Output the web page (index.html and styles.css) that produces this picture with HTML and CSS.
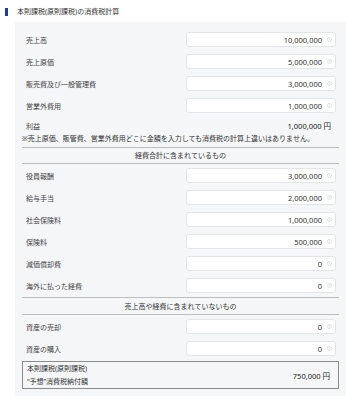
FILE: index.html
```html
<!DOCTYPE html>
<html lang="ja">
<head>
  <meta charset="UTF-8">
  <title>本則課税(原則課税)の消費税計算</title>
  <link rel="stylesheet" href="styles.css">
</head>
<body>
  <h1 class="title"><span class="bar"></span>本則課税(原則課税)の消費税計算</h1>

  <div class="panel">
    <div class="row"><span class="label">売上高</span><div class="field"><span>10,000,000</span><svg class="clear" viewBox="0 0 10 10"><circle cx="5" cy="5" r="4.2"/><path d="M3.3 3.3l3.4 3.4M6.7 3.3l-3.4 3.4"/></svg></div></div>
    <div class="row"><span class="label">売上原価</span><div class="field"><span>5,000,000</span><svg class="clear" viewBox="0 0 10 10"><circle cx="5" cy="5" r="4.2"/><path d="M3.3 3.3l3.4 3.4M6.7 3.3l-3.4 3.4"/></svg></div></div>
    <div class="row"><span class="label">販売費及び一般管理費</span><div class="field"><span>3,000,000</span><svg class="clear" viewBox="0 0 10 10"><circle cx="5" cy="5" r="4.2"/><path d="M3.3 3.3l3.4 3.4M6.7 3.3l-3.4 3.4"/></svg></div></div>
    <div class="row"><span class="label">営業外費用</span><div class="field"><span>1,000,000</span><svg class="clear" viewBox="0 0 10 10"><circle cx="5" cy="5" r="4.2"/><path d="M3.3 3.3l3.4 3.4M6.7 3.3l-3.4 3.4"/></svg></div></div>

    <div class="profit"><span class="label">利益</span><span class="amount">1,000,000 円</span></div>
    <p class="note">※売上原価、販管費、営業外費用どこに金額を入力しても消費税の計算上違いはありません。</p>

    <!-- 経費に含まれるもの -->
    <div class="heading">経費合計に含まれているもの</div>
    <div class="group">
      <div class="row"><span class="label">役員報酬</span><div class="field"><span>3,000,000</span><svg class="clear" viewBox="0 0 10 10"><circle cx="5" cy="5" r="4.2"/><path d="M3.3 3.3l3.4 3.4M6.7 3.3l-3.4 3.4"/></svg></div></div>
      <div class="row"><span class="label">給与手当</span><div class="field"><span>2,000,000</span><svg class="clear" viewBox="0 0 10 10"><circle cx="5" cy="5" r="4.2"/><path d="M3.3 3.3l3.4 3.4M6.7 3.3l-3.4 3.4"/></svg></div></div>
      <div class="row"><span class="label">社会保険料</span><div class="field"><span>1,000,000</span><svg class="clear" viewBox="0 0 10 10"><circle cx="5" cy="5" r="4.2"/><path d="M3.3 3.3l3.4 3.4M6.7 3.3l-3.4 3.4"/></svg></div></div>
      <div class="row"><span class="label">保険料</span><div class="field"><span>500,000</span><svg class="clear" viewBox="0 0 10 10"><circle cx="5" cy="5" r="4.2"/><path d="M3.3 3.3l3.4 3.4M6.7 3.3l-3.4 3.4"/></svg></div></div>
      <div class="row"><span class="label">減価償却費</span><div class="field"><span>0</span><svg class="clear" viewBox="0 0 10 10"><circle cx="5" cy="5" r="4.2"/><path d="M3.3 3.3l3.4 3.4M6.7 3.3l-3.4 3.4"/></svg></div></div>
      <div class="row last"><span class="label">海外に払った経費</span><div class="field"><span>0</span><svg class="clear" viewBox="0 0 10 10"><circle cx="5" cy="5" r="4.2"/><path d="M3.3 3.3l3.4 3.4M6.7 3.3l-3.4 3.4"/></svg></div></div>
    </div>

    <!-- 含まれないもの -->
    <div class="heading second">売上高や経費に含まれていないもの</div>
    <div class="row"><span class="label">資産の売却</span><div class="field"><span>0</span><svg class="clear" viewBox="0 0 10 10"><circle cx="5" cy="5" r="4.2"/><path d="M3.3 3.3l3.4 3.4M6.7 3.3l-3.4 3.4"/></svg></div></div>
    <div class="row last"><span class="label">資産の購入</span><div class="field"><span>0</span><svg class="clear" viewBox="0 0 10 10"><circle cx="5" cy="5" r="4.2"/><path d="M3.3 3.3l3.4 3.4M6.7 3.3l-3.4 3.4"/></svg></div></div>

    <div class="result">
      <div class="result-label">本則課税(原則課税)<br>“予想”消費税納付額</div>
      <span class="amount">750,000 円</span>
    </div>
  </div>
</body>
</html>
```

FILE: styles.css
```css
body {
  margin: 0;
  font-family: "Noto Sans", "Noto Sans CJK JP", sans-serif;
  font-size: 7px;
  color: #444;
  background: #fff;
}
.title {
  display: flex;
  align-items: center;
  height: 22px;
  margin: 0;
  padding-left: 5px;
  font-size: 7px;
  font-weight: normal;
  color: #333;
}
.bar {
  width: 3px;
  height: 8px;
  margin-right: 9px;
  margin-top: 2px;
  background: #1f3a93;
}
.panel {
  margin: 0 17px 0 15px;
  padding: 10px 7px 7px;
  background: #f5f6f8;
}
.row {
  display: flex;
  align-items: center;
  height: 15px;
  margin-bottom: 7px;
  padding: 0 3px 0 4px;
}
.row.last {
  margin-bottom: 4px;
}
.label {
  flex: 1;
}
.field {
  display: flex;
  align-items: center;
  justify-content: flex-end;
  box-sizing: border-box;
  width: 150px;
  height: 15px;
  padding-right: 3px;
  background: #fff;
  border: 1px solid #e3e5e9;
  border-radius: 3px;
  font-size: 7.5px;
  color: #333;
}
.clear {
  width: 5px;
  height: 5px;
  margin-left: 5px;
  fill: none;
  stroke: #c8c8c8;
  stroke-width: 1;
}
.profit {
  display: flex;
  align-items: center;
  height: 11px;
  padding: 0 8px 0 4px;
  margin-top: 3px;
}
.amount {
  font-size: 7.5px;
  color: #222;
}
.note {
  margin: 2px 0 0;
  line-height: 11px;
  padding-bottom: 3px;
  border-bottom: 1px solid #bdbdbd;
  color: #333;
}
.heading {
  padding: 2px 0;
  line-height: 11px;
  text-align: center;
  border-bottom: 1px solid #bdbdbd;
  margin-bottom: 4px;
  color: #333;
}
.group {
  border-bottom: 1px solid #bdbdbd;
}
.heading.second {
  padding-top: 3px;
  margin-bottom: 4px;
}
.result {
  display: flex;
  align-items: center;
  margin-top: 5px;
  padding: 0 8px 0 4px;
  border: 1px solid #8c8c8c;
  background: #fff0;
}
.result-label {
  flex: 1;
  line-height: 13px;
  color: #333;
}
```
